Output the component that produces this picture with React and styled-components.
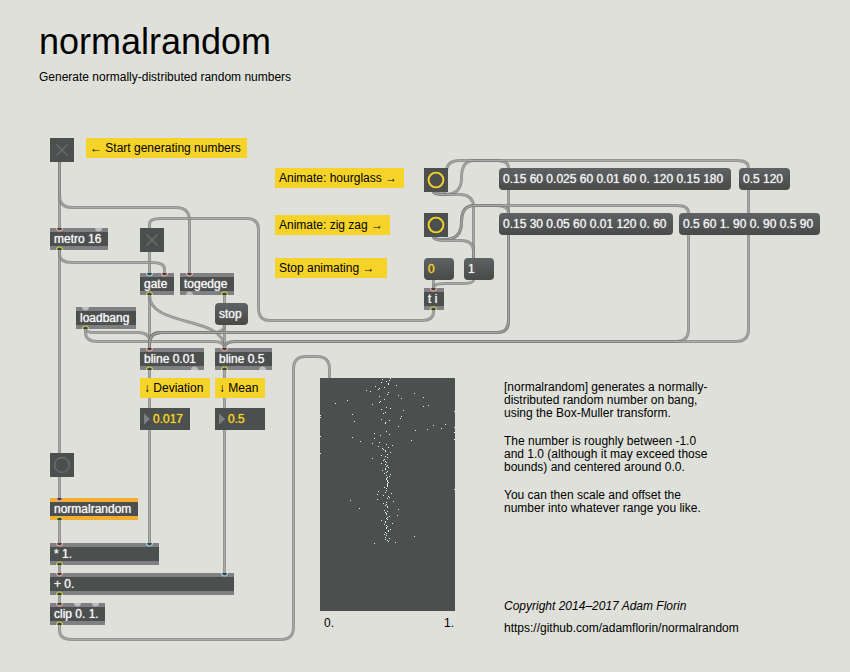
import React from "react";
import styled, { createGlobalStyle } from "styled-components";

const GlobalStyle = createGlobalStyle`
  html, body {
    margin: 0;
    background: #dfe0da;
  }
  body, button, input {
    font-family: "Liberation Sans", Arial, Helvetica, sans-serif;
    font-size: 12px;
  }
`;

const Patcher = styled.main`
  position: relative;
  box-sizing: border-box;
  min-width: 830px;
  min-height: 100vh;
  padding: 20px 39px;
  color: #000;
`;

const Title = styled.h1`
  margin: 0;
  font-size: 36px;
  line-height: 44px;
  font-weight: 400;
`;

const Subtitle = styled.p`
  margin: 6px 0 0;
  line-height: 14px;
`;

const Cords = styled.svg`
  position: absolute;
  top: 0;
  left: 0;
  pointer-events: none;
`;

/* Everything placed on the patching canvas */
const Node = styled.div`
  position: absolute;
  left: ${(p) => p.$x}px;
  top: ${(p) => p.$y}px;
`;

const Comment = styled(Node)`
  box-sizing: border-box;
  min-width: ${(p) => p.$w}px;
  padding: 0 4px;
  line-height: 20px;
  white-space: nowrap;
  background: #f5d328;
`;

const ObjectBox = styled(Node)`
  box-sizing: border-box;
  min-width: ${(p) => p.$w}px;
  height: 22px;
  padding: 0 4px;
  border: solid ${(p) => p.$edge || "#808084"};
  border-width: 4px 0;
  background: #4b4f4d;
  color: #f4f4f4;
  text-shadow: 0 0 1px currentColor;
  line-height: 14px;
  white-space: nowrap;
`;

const Ports = styled.svg`
  position: absolute;
  left: 0;
  top: -4px;
`;

const Message = styled(Node).attrs({ as: "button", type: "button" })`
  box-sizing: border-box;
  min-width: ${(p) => p.$w}px;
  height: 22px;
  padding: 0 4px;
  border: 0;
  border-radius: 4px;
  background: linear-gradient(#5f6264, #474a47);
  color: ${(p) => (p.$lit ? "#f5d328" : "#f0f0f0")};
  text-shadow: 0 0 1px currentColor;
  line-height: 22px;
  text-align: left;
  white-space: nowrap;
`;

const ToggleBox = styled(Node).attrs({ as: "label" })`
  width: 24px;
  height: 24px;
  background: #4b4f4d;
`;

const ToggleInput = styled.input`
  position: absolute;
  inset: 0;
  width: 24px;
  height: 24px;
  margin: 0;
  opacity: 0;
`;

const BangButton = styled(Node).attrs({ as: "button", type: "button" })`
  width: 24px;
  height: 24px;
  padding: 0;
  border: 0;
  background: #4b4f4d;
`;

const Glyph = styled.svg`
  display: block;
`;

const NumberBox = styled(Node)`
  display: flex;
  align-items: center;
  gap: 2px;
  box-sizing: border-box;
  width: 50px;
  height: 22px;
  padding-left: 4px;
  background: #4b4f4d;
`;

const NumberInput = styled.input`
  flex: 1;
  min-width: 0;
  height: 22px;
  padding: 0;
  padding-left: 1px;
  border: 0;
  background: transparent;
  color: #f5d328;
  text-shadow: 0 0 1px currentColor;
`;

const Plot = styled(Node)`
  width: 135px;
`;

const PlotSurface = styled.svg`
  display: block;
  background: #4b4f4d;
`;

const Axis = styled.div`
  display: flex;
  justify-content: space-between;
  padding: 5px 1px 0 4px;
  line-height: 14px;
`;

const About = styled(Node)`
  display: flex;
  flex-direction: column;
  gap: 84px;
`;

const Notes = styled.section`
  display: flex;
  flex-direction: column;
  gap: 15px;
`;

const Paragraph = styled.p`
  margin: 0;
  line-height: 13px;
  white-space: nowrap;
`;

const Credits = styled.footer`
  display: flex;
  flex-direction: column;
  gap: 8px;
  line-height: 14px;
`;

const RepoLink = styled.a`
  color: inherit;
  text-decoration: none;
`;

const CORDS = [
  "M59.5 162V228",
  "M59.5 162V195Q59.5 207.5 72 207.5H176Q189.5 207.5 189.5 221V273",
  "M149.5 252V273",
  "M59.5 250V453",
  "M59.5 250V254Q59.5 262.5 72 262.5H152Q164.5 262.5 164.5 269V273",
  "M149.5 295V348",
  "M149.5 295C149.5 328 224.5 315 224.5 348",
  "M224.5 295V303",
  "M224.5 325V348",
  "M224.5 325Q224.5 332.5 213 332.5H161Q149.5 332.5 149.5 344V348",
  "M85.5 329Q85.5 332.5 95 332.5H138Q149.5 332.5 149.5 342V348",
  "M85.5 329V332Q85.5 341.5 97 341.5H213Q224.5 341.5 224.5 348",
  "M508.5 190V321Q508.5 332.5 497 332.5H161Q149.5 332.5 149.5 344V348",
  "M508.5 235V321Q508.5 332.5 497 332.5H161Q149.5 332.5 149.5 344V348",
  "M688.5 235V329Q688.5 341.5 676 341.5H236Q224.5 341.5 224.5 348",
  "M748.5 190V329Q748.5 341.5 736 341.5H236Q224.5 341.5 224.5 348",
  "M433.5 192Q433.5 194.5 445 194.5Q461.5 194.5 461.5 178Q461.5 160.5 474 160.5H497Q508.5 160.5 508.5 168",
  "M433.5 192Q446.5 197.5 446.5 186V172Q446.5 160.5 460 160.5H737Q748.5 160.5 748.5 168",
  "M433.5 192Q433.5 194.5 445 194.5H461Q473.5 195.5 473.5 207V258",
  "M433.5 237Q433.5 239.5 445 239.5Q461.5 239.5 461.5 222Q461.5 205.5 474 205.5H497Q508.5 205.5 508.5 213",
  "M433.5 237Q433.5 239.5 445 239.5Q461.5 239.5 461.5 222Q461.5 205.5 474 205.5H677Q688.5 205.5 688.5 213",
  "M433.5 237Q433.5 240.5 445 240.5H461Q473.5 240.5 473.5 252V258",
  "M433.5 280V288",
  "M473.5 280Q473.5 283.5 462 283.5H445Q433.5 283.5 433.5 288",
  "M433.5 310V312Q433.5 320.5 422 320.5H270Q258.5 320.5 258.5 308V230Q258.5 218.5 247 218.5H161Q149.5 218.5 149.5 224V228",
  "M149.5 370V543",
  "M224.5 370V573",
  "M59.5 477V498",
  "M59.5 520V543",
  "M59.5 565V573",
  "M59.5 595V603",
  "M59.5 625V630Q59.5 639.5 72 639.5H281Q293.5 639.5 293.5 627V369Q293.5 356.5 306 356.5H317Q329.5 356.5 329.5 369V378",
];

const PORT_COLORS = { hot: "#f0aa9c", cold: "#93d3e0", out: "#cbd545" };

/* Ports are given as [offset, kind]; kind "idle" is an unconnected port. */
const OBJECTS = [
  { text: "metro 16", x: 50, y: 228, w: 58, ins: [[9, "hot"], [48, "idle"]], outs: [[9, "out"]] },
  { text: "gate", x: 140, y: 273, w: 34, ins: [[9, "cold"], [24, "hot"]], outs: [[9, "out"]] },
  { text: "togedge", x: 180, y: 273, w: 54, ins: [[9, "hot"]], outs: [[9, "idle"], [44, "out"]] },
  { text: "loadbang", x: 76, y: 307, w: 60, ins: [[9, "idle"]], outs: [[9, "out"]] },
  { text: "bline 0.01", x: 140, y: 348, w: 64, ins: [[9, "hot"]], outs: [[9, "out"], [54, "idle"]] },
  { text: "bline 0.5", x: 215, y: 348, w: 57, ins: [[9, "hot"]], outs: [[9, "out"], [47, "idle"]] },
  { text: "t i", x: 424, y: 288, w: 20, ins: [[9, "hot"]], outs: [[9, "out"]] },
  { text: "normalrandom", x: 50, y: 498, w: 88, edge: "#f3ae2f", ins: [[9, "hot"]], outs: [[9, "out"]] },
  { text: "* 1.", x: 50, y: 543, w: 109, ins: [[9, "hot"], [99, "cold"]], outs: [[9, "out"]] },
  { text: "+ 0.", x: 50, y: 573, w: 184, ins: [[9, "hot"], [174, "cold"]], outs: [[9, "out"]] },
  { text: "clip 0. 1.", x: 50, y: 603, w: 55, ins: [[9, "hot"], [27, "idle"], [45, "idle"]], outs: [[9, "out"]] },
];

const MESSAGES = [
  { text: "0.15 60 0.025 60 0.01 60 0. 120 0.15 180", x: 499, y: 168, w: 232 },
  { text: "0.5 120", x: 739, y: 168, w: 51 },
  { text: "0.15 30 0.05 60 0.01 120 0. 60", x: 499, y: 213, w: 174 },
  { text: "0.5 60 1. 90 0. 90 0.5 90", x: 679, y: 213, w: 141 },
  { text: "0", x: 424, y: 258, w: 30, lit: true },
  { text: "1", x: 464, y: 258, w: 30 },
  { text: "stop", x: 215, y: 303, w: 33 },
];

const COMMENTS = [
  { text: "← Start generating numbers", x: 86, y: 138, w: 161 },
  { text: "Animate: hourglass →", x: 275, y: 168, w: 129 },
  { text: "Animate: zig zag →", x: 275, y: 215, w: 115 },
  { text: "Stop animating →", x: 275, y: 258, w: 112 },
  { text: "↓ Deviation", x: 140, y: 378, w: 70 },
  { text: "↓ Mean", x: 215, y: 378, w: 50 },
];

const POINTS = [
  [62, 1], [70, 0], [69, 2], [61, 4], [66, 3], [68, 5], [68, 6], [76, 7], [55, 8], [64, 9],
  [59, 10], [58, 11], [46, 12], [50, 13], [68, 14], [67, 16], [94, 15], [78, 17], [59, 18],
  [103, 19], [81, 20], [64, 21], [27, 22], [60, 23], [59, 24], [15, 25], [52, 26], [108, 27],
  [103, 28], [66, 29], [70, 30], [61, 31], [83, 32], [134, 33], [65, 34], [63, 35], [32, 36],
  [0, 37], [81, 38], [0, 39], [80, 40], [61, 41], [69, 42], [34, 43], [65, 44], [65, 45],
  [125, 46], [113, 47], [78, 48], [134, 49], [121, 50], [107, 51], [95, 52], [66, 53],
  [134, 54], [54, 55], [69, 56], [60, 57], [0, 58], [32, 59], [54, 60], [134, 61], [91, 62],
  [40, 63], [59, 64], [52, 65], [66, 66], [72, 67], [58, 68], [68, 69], [62, 70], [63, 71],
  [65, 72], [65, 73], [70, 74], [0, 75], [67, 76], [61, 77], [65, 78], [67, 79], [52, 80],
  [64, 81], [63, 82], [65, 83], [66, 84], [61, 85], [65, 86], [67, 87], [66, 88], [68, 89],
  [65, 90], [65, 91], [62, 92], [67, 93], [66, 94], [64, 95], [70, 96], [66, 97], [69, 98],
  [67, 99], [66, 100], [66, 101], [67, 102], [67, 103], [68, 104], [67, 105], [67, 106],
  [67, 107], [67, 108], [64, 109], [66, 110], [134, 111], [66, 112], [58, 113], [65, 114],
  [71, 115], [57, 116], [63, 117], [68, 118], [69, 119], [67, 120], [57, 121], [30, 122],
  [73, 123], [66, 124], [63, 125], [66, 126], [65, 127], [67, 128], [67, 129], [39, 130],
  [78, 131], [64, 132], [67, 133], [65, 134], [66, 135], [66, 136], [77, 137], [69, 138],
  [67, 139], [66, 140], [67, 141], [61, 142], [65, 143], [65, 144], [72, 145], [64, 146],
  [66, 147], [67, 148], [66, 149], [66, 150], [70, 151], [68, 152], [68, 153], [65, 154],
  [66, 155], [64, 156], [66, 157], [94, 158], [65, 159], [69, 160], [65, 161], [67, 162],
  [68, 163], [75, 164], [54, 165],
];

function Port({ x, y, kind }) {
  return kind === "idle" ? (
    <circle cx={x + 0.5} cy={y} r="3.5" fill="#bdbdc0" />
  ) : (
    <circle cx={x + 0.5} cy={y} r="3" fill="#3f4241" stroke={PORT_COLORS[kind]} strokeWidth="1.2" />
  );
}

function PatchObject({ item }) {
  return (
    <ObjectBox $x={item.x} $y={item.y} $w={item.w} $edge={item.edge}>
      <Ports width={item.w} height="22" aria-hidden="true">
        {item.ins.map(([x, kind]) => (
          <Port key={"in" + x} x={x} y={0} kind={kind} />
        ))}
        {item.outs.map(([x, kind]) => (
          <Port key={"out" + x} x={x} y={22} kind={kind} />
        ))}
      </Ports>
      {item.text}
    </ObjectBox>
  );
}

function Toggle({ x, y, label }) {
  return (
    <ToggleBox $x={x} $y={y}>
      <ToggleInput type="checkbox" aria-label={label} />
      <Glyph width="24" height="24" aria-hidden="true">
        <path d="M6.5 6.5L17.5 17.5M17.5 6.5L6.5 17.5" stroke="#68696d" strokeWidth="1.7" />
      </Glyph>
    </ToggleBox>
  );
}

function Bang({ x, y, label, lit }) {
  return (
    <BangButton $x={x} $y={y} aria-label={label}>
      <Glyph width="24" height="24" aria-hidden="true">
        <circle cx="12" cy="12" r="7.4" fill="none" stroke={lit ? "#f5d328" : "#68696d"} strokeWidth={lit ? 1.9 : 1.6} />
      </Glyph>
    </BangButton>
  );
}

function NumberField({ x, y, value, label }) {
  return (
    <NumberBox $x={x} $y={y}>
      <Glyph width="6" height="12" aria-hidden="true">
        <path d="M0 0.5L6 6L0 11.5Z" fill="#808084" />
      </Glyph>
      <NumberInput aria-label={label} defaultValue={value} />
    </NumberBox>
  );
}

export default function App() {
  return (
    <Patcher>
      <GlobalStyle />
      <Cords width="850" height="660" fill="none" aria-hidden="true">
        {CORDS.map((d, i) => (
          <g key={i}>
            <path d={d} stroke="#7c7c7c" strokeOpacity="0.75" strokeWidth="3" />
            <path d={d} stroke="#a9a9a9" strokeWidth="1" />
          </g>
        ))}
      </Cords>

      <header>
        <Title>normalrandom</Title>
        <Subtitle>Generate normally-distributed random numbers</Subtitle>
      </header>

      {COMMENTS.map((c) => (
        <Comment key={c.text} $x={c.x} $y={c.y} $w={c.w}>{c.text}</Comment>
      ))}

      <Toggle x={50} y={138} label="Start generating numbers" />
      <Toggle x={140} y={228} label="Animation gate" />
      <Bang x={424} y={168} label="Animate: hourglass" lit />
      <Bang x={424} y={213} label="Animate: zig zag" lit />
      <Bang x={50} y={453} label="Generate" />

      {MESSAGES.map((m) => (
        <Message key={m.text} $x={m.x} $y={m.y} $w={m.w} $lit={m.lit}>{m.text}</Message>
      ))}
      {OBJECTS.map((o) => (
        <PatchObject key={o.text} item={o} />
      ))}

      <NumberField x={140} y={408} value="0.017" label="Deviation" />
      <NumberField x={215} y={408} value="0.5" label="Mean" />

      <Plot $x={320} $y={378}>
        <PlotSurface width="135" height="233" role="img" aria-label="Generated values">
          {POINTS.map(([x, y]) => (
            <rect key={y + "-" + x} x={x} y={y} width="1" height="1" fill="#dff2f2" />
          ))}
        </PlotSurface>
        <Axis>
          <span>0.</span>
          <span>1.</span>
        </Axis>
      </Plot>

      <About $x={504} $y={381}>
        <Notes>
          <Paragraph>
            [normalrandom] generates a normally-<br />
            distributed random number on bang,<br />
            using the Box-Muller transform.
          </Paragraph>
          <Paragraph>
            The number is roughly between -1.0<br />
            and 1.0 (although it may exceed those<br />
            bounds) and centered around 0.0.
          </Paragraph>
          <Paragraph>
            You can then scale and offset the<br />
            number into whatever range you like.
          </Paragraph>
        </Notes>
        <Credits>
          <em>Copyright 2014–2017 Adam Florin</em>
          <RepoLink href="https://github.com/adamflorin/normalrandom">
            https://github.com/adamflorin/normalrandom
          </RepoLink>
        </Credits>
      </About>
    </Patcher>
  );
}
